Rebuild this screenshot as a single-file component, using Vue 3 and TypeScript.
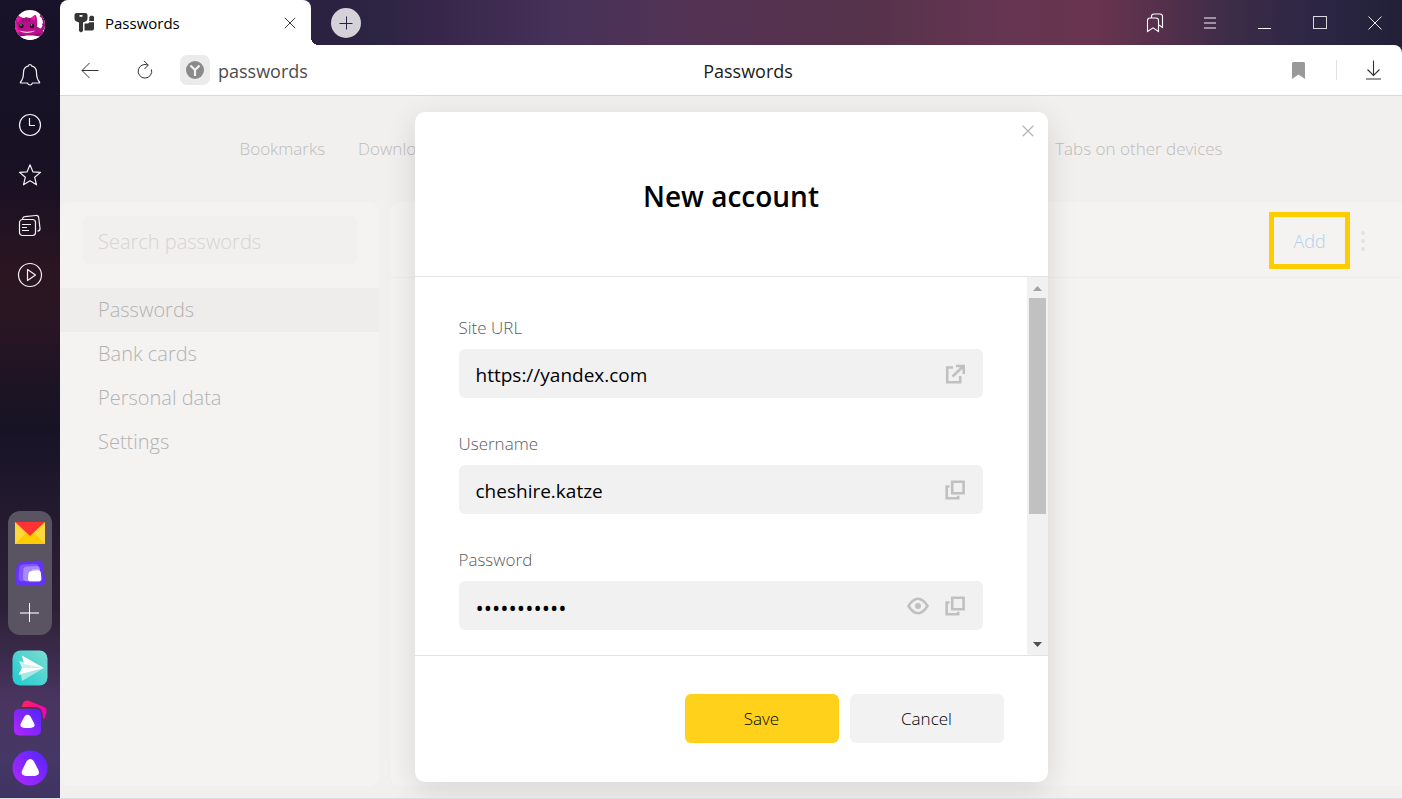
<script setup lang="ts">
import { ref } from 'vue'

interface Section {
  id: string
  title: string
}

const sections: Section[] = [
  { id: 'passwords', title: 'Passwords' },
  { id: 'cards', title: 'Bank cards' },
  { id: 'personal', title: 'Personal data' },
  { id: 'settings', title: 'Settings' },
]

const active = ref('passwords')
const address = ref('passwords')
const search = ref('')
const siteUrl = ref('https://yandex.com')
const username = ref('cheshire.katze')
const password = ref('qwertyuiopa')
const revealed = ref(false)
</script>

<template>
  <div class="browser">
    <aside class="rail">
      <div class="rail-group">
        <button class="rail-item" aria-label="Profile">
          <svg width="32" height="32" viewBox="0 0 32 32">
            <defs><clipPath id="face"><circle cx="16" cy="16" r="15" /></clipPath></defs>
            <circle cx="16" cy="16" r="15" fill="#fff" />
            <g clip-path="url(#face)">
              <path d="M26 6c4 1 5 7 4 11-1 3-3 5-6 5" fill="none" stroke="#a3127e" stroke-width="3" />
              <path d="M2 8q1-2 4-.5l3 1.500q4-1 8 0l3-2.500q2-1.500 2.500 1c.8 4 1 7 .5 10l5 3q2 2 1 4.500L25 28H5l-3-5c-1.500-5-1.500-10 0-15z" fill="#b8128a" />
              <path d="M2.500 7.500l5 1.500-4 5zM21.500 6l-.8 6-4-3zM1 12c2 2 2 8 5 11l-4 1z" fill="#f01ba4" />
              <path d="M9 9v4M12 8v5M15 9v4M28 10l3 1M28 15l3 1" stroke="#7c0c62" />
              <circle cx="7.500" cy="17" r="2.200" fill="#281326" />
              <circle cx="18" cy="17" r="2.200" fill="#281326" />
              <circle cx="7" cy="16" r=".8" fill="#52d6b5" />
              <circle cx="17.500" cy="16" r=".8" fill="#52d6b5" />
              <path d="M5 21.500c5 1.500 11 1.500 16 0-2 3-13 3.500-16 0z" fill="#eac3df" />
              <path d="M3 26c6-2 8 1 12 0s8-2 13-1l-3 4H4z" fill="#990b78" />
              <path d="M4 28c7-2 17-2 24 0v4H4z" fill="#fff" />
            </g>
          </svg>
        </button>
        <button class="rail-item" aria-label="Notifications">
          <svg class="line" width="24" height="24" viewBox="0 0 24 24">
            <path d="M12 1.500c-.9 0-1.500.6-1.500 1.400C7 3.700 5.500 6.500 5.500 9.500c0 5-1 7.500-3 9.500-.4.500-.2 1 .4 1H9.500c.5 1.500 1.300 2 2.500 2s2-.5 2.500-2h6.600c.6 0 .8-.5.4-1-2-2-3-4.500-3-9.500 0-3-1.500-5.800-5-6.600 0-.8-.6-1.400-1.500-1.400z" />
          </svg>
        </button>
        <button class="rail-item" aria-label="History">
          <svg class="line" width="24" height="24" viewBox="0 0 24 24">
            <circle cx="12" cy="12" r="10.500" /><path d="M11.500 5v7.500H17" />
          </svg>
        </button>
        <button class="rail-item" aria-label="Favorites">
          <svg class="line" width="24" height="24" viewBox="0 0 24 24">
            <path d="M12 1.800l2.900 7 7.600.6-5.800 4.900 1.800 7.500-6.500-4-6.500 4 1.800-7.500-5.800-4.900 7.600-.6z" />
          </svg>
        </button>
        <button class="rail-item" aria-label="Collections">
          <svg class="line" width="24" height="24" viewBox="0 0 24 24">
            <rect x="1.500" y="6.500" width="16" height="16" rx="3" />
            <path d="M4.500 6c.3-1.600 1-2.200 2.300-2.300l11-1.200c1.700-.2 2.700.6 2.900 2.200l1.300 10.500c.2 1.900-.8 2.700-2.500 3M4 11.500h9M4 14.500h5M4 17.500h7" />
          </svg>
        </button>
        <button class="rail-item" aria-label="Video">
          <svg class="line" width="26" height="26" viewBox="0 0 26 26">
            <circle cx="13" cy="13" r="11.500" /><path d="M10.500 7.500v11l8-5.500z" />
          </svg>
        </button>
      </div>

      <div class="rail-group">
        <div class="dock">
          <button class="dock-item" aria-label="Mail">
            <svg width="30" height="22" viewBox="0 0 30 22">
              <path d="M0 0h30v22H0z" fill="#ffd93b" />
              <path d="M0 22l11-11h8l11 11z" fill="#fc0" />
              <path d="M0 0h30L15 14z" fill="#f33" />
            </svg>
          </button>
          <button class="dock-item" aria-label="Browser panels">
            <svg width="30" height="26" viewBox="0 0 30 26">
              <path d="M7 2l16-1.500c3-.2 4.500 1 5 4L30 20c.4 3.500-1 5.300-4 5.300H5c-3.500 0-5.200-1.500-5-5L1.600 7C2 4 3.500 2.300 7 2z" fill="#6432f8" />
              <path d="M8 4.500l11-.7c3-.2 4.400.8 4.700 3.500l.6 14H7c-2.500 0-3.600-1-3.500-3.500l.6-9c.2-2.600 1.200-4.100 3.900-4.300z" fill="#8156fb" />
              <path d="M12 6.500l9-.4c2.600 0 3.700 1 3.900 3.400v11.800H12c-2.800 0-4.200-1.200-4-4l.4-7.200c.1-2.300 1-3.500 3.600-3.600z" fill="#a58bfc" />
              <path d="M17 9.500l5-.3c2-.1 3 .9 3.100 3l.2 9H15z" fill="#cdbffd" />
              <path d="M17 11l6-.6c1.800-.1 2.600.5 2.800 2.200l.6 6c.1 1.900-.6 2.700-2.500 2.700h-8c-2 0-3-.7-2.900-2.800l.4-4.500c.2-2 1.400-2.800 3.600-3z" fill="#fff" />
            </svg>
          </button>
          <button class="dock-item" aria-label="Add service">
            <svg width="20" height="20" viewBox="0 0 20 20">
              <path d="M0 10h19" stroke="#b5b1b8" stroke-width="2" /><path d="M9.500 0v19" stroke="#fff" />
            </svg>
          </button>
        </div>
        <button class="rail-item" aria-label="Messenger">
          <svg width="36" height="36" viewBox="0 0 36 36">
            <defs>
              <linearGradient id="teal" x1="1" y1="0" x2="0" y2="1"><stop stop-color="#7edbd2" /><stop offset="1" stop-color="#1dcbd0" /></linearGradient>
            </defs>
            <rect x=".5" y=".5" width="35" height="35" rx="8" fill="url(#teal)" />
            <path d="M9 24l23-6-22 13z" fill="#a5e9e7" />
            <path d="M7 11l25 7-25 7 3-7z" fill="#c9f3f1" />
            <path d="M10 5.500L32 18 12 14z" fill="#fff" /><path d="M6.500 24.500L10 18h22z" fill="#fff" />
          </svg>
        </button>
        <button class="rail-item" aria-label="Alice chat">
          <svg width="36" height="36" viewBox="0 0 36 36">
            <defs>
              <linearGradient id="violet" x1="1" y1="0" x2="0" y2="1"><stop stop-color="#5126ff" /><stop offset="1" stop-color="#b426ff" /></linearGradient>
              <linearGradient id="pink"><stop stop-color="#ff2458" /><stop offset="1" stop-color="#fa00b4" /></linearGradient>
            </defs>
            <path d="M9.500 7l1.500-3.500C12 .8 14 .2 16.500.8L31 6.500c3 1.200 4 3 3.300 6L32.500 19 31 18c0-6-1-10-7-11z" fill="url(#pink)" />
            <rect x="2" y="9" width="27" height="26.500" rx="5" fill="url(#violet)" />
            <path d="M12.500 16.500c1.600-2.400 4.400-2.400 6 0l3.500 6.500c1.600 3.500.3 5-6.500 5s-8-1.500-6.500-5z" fill="#fff" />
          </svg>
        </button>
        <button class="rail-item" aria-label="Alice">
          <svg width="36" height="36" viewBox="0 0 36 36">
            <circle cx="18" cy="18" r="17.500" fill="url(#violet)" />
            <path d="M14.500 11.500c2-3.500 5.500-3.500 7.500 0l4.300 8.500c1.800 4.400.2 6-8 6s-9.700-1.600-8-6z" fill="#fff" />
          </svg>
        </button>
      </div>
    </aside>

    <div class="window">
      <header class="tabbar">
        <div class="tab">
          <svg width="21" height="21" viewBox="0 0 21 21" fill="#353535">
            <path d="M2.500 1h9q2 0 2 2v3.500q0 2-1.500 2.700l-3 1.300V19l-2 1.500L5 19v-8.500L2 9.200Q.5 8.500.5 6.500V3q0-2 2-2zm3 2v1.800h3V3z" fill-rule="evenodd" />
            <path d="M15 5.500l1.500-1.800h2q1.500 0 1.500 1.500V9h-5q.5-1 .3-3.500zM10.500 11.500h3.500l1.500-1.300H20v6.500q0 1.800-1.800 1.800h-7.700z" />
          </svg>
          <span class="tab-title">Passwords</span>
          <button class="plain" aria-label="Close tab">
            <svg width="12" height="12" viewBox="0 0 12 12" fill="none" stroke="#333b4d"><path d="M.8.8l10.400 10.400M11.200.8L.8 11.200" /></svg>
          </button>
        </div>
        <span class="tab-foot"></span>
        <button class="new-tab" aria-label="New tab">
          <svg width="14" height="14" viewBox="0 0 14 14" stroke="#26233a"><path d="M.5 7.500h13M7.500.5v13" /></svg>
        </button>
        <div class="window-controls">
          <button aria-label="Bookmarks panel">
            <svg width="18" height="20" viewBox="0 0 18 20" fill="none" stroke="#fff" stroke-width="1.100">
              <path d="M1.500 18.500V7.500q0-2.500 2.500-2.500h6q2.500 0 2.500 2.500v11L7 14.800zM5.500 4.500V3.500q0-2.500 2.500-2.500h6q2.500 0 2.500 2.500v11L13 12" />
            </svg>
          </button>
          <button aria-label="Menu">
            <svg width="12" height="12" viewBox="0 0 12 12" stroke="#9d91a3" stroke-width="2"><path d="M0 1h12M0 6h12M0 11h12" /></svg>
          </button>
          <button aria-label="Minimize">
            <svg width="13" height="13" viewBox="0 0 13 13" stroke="#fff"><path d="M0 12.500h13" /></svg>
          </button>
          <button aria-label="Maximize">
            <svg width="14" height="14" viewBox="0 0 14 14" fill="none" stroke="#dad8de"><rect x=".5" y=".5" width="13" height="12" /></svg>
          </button>
          <button aria-label="Close window">
            <svg width="14" height="14" viewBox="0 0 14 14" stroke="#fff" stroke-width=".9"><path d="M.5.5l13 13M13.500.5l-13 13" /></svg>
          </button>
        </div>
      </header>

      <div class="toolbar">
        <button class="tool" aria-label="Back">
          <svg width="18" height="16" viewBox="0 0 18 16" fill="none" stroke="#333"><path d="M17.500 8.500H1M8.500 1L1 8.500 8.500 16" /></svg>
        </button>
        <button class="tool" aria-label="Reload">
          <svg width="16" height="20" viewBox="0 0 16 20" fill="none" stroke="#333"><path d="M14.500 9.500A6.800 6.800 0 1 1 11 5.200M7 .8l4.300 4.300L7.500 9" /></svg>
        </button>
        <span class="site-badge">
          <svg width="18" height="18" viewBox="0 0 18 18"><circle cx="9" cy="9" r="9" fill="#8a8a8a" /><path d="M4.500 4.500L9 9l4.500-4.500M9 9v6" fill="none" stroke="#f3f3f3" stroke-width="2.200" /></svg>
        </span>
        <div class="omnibox">
          <input v-model="address" type="text" aria-label="Address" />
          <span class="page-title">Passwords</span>
        </div>
        <button class="plain" aria-label="Bookmark page">
          <svg width="13" height="17" viewBox="0 0 13 17"><path d="M1 0h11l1 1v16l-6.500-4.500L0 17V1z" fill="#999" /></svg>
        </button>
        <span class="divider"></span>
        <button class="plain" aria-label="Downloads panel">
          <svg width="15" height="20" viewBox="0 0 15 20" fill="none" stroke="#333" stroke-width="1.100"><path d="M7.500.5v15M1.500 9.500l6 6 6-6M0 19h15" /></svg>
        </button>
      </div>

      <main class="page">
        <nav class="page-nav">
          <a href="#bookmarks">Bookmarks</a>
          <a href="#downloads">Downloads</a>
          <a class="last" href="#devices">Tabs on other devices</a>
        </nav>
        <div class="panels">
          <section class="side-panel">
            <input v-model="search" type="text" placeholder="Search passwords" aria-label="Search passwords" />
            <ul>
              <li v-for="item in sections" :key="item.id">
                <a :href="'#' + item.id" :class="{ active: active === item.id }" @click.prevent="active = item.id">{{ item.title }}</a>
              </li>
            </ul>
          </section>
          <section class="list-panel">
            <div class="list-tools">
              <button class="add">Add</button>
              <button class="plain" aria-label="More">
                <svg width="4" height="20" viewBox="0 0 4 20" fill="#e3e2e1"><circle cx="2" cy="2" r="2" /><circle cx="2" cy="10" r="2" /><circle cx="2" cy="18" r="2" /></svg>
              </button>
            </div>
          </section>
        </div>

        <div class="overlay">
          <form class="dialog" role="dialog" aria-labelledby="dialog-title" @submit.prevent>
            <header class="dialog-head">
              <h1 id="dialog-title">New account</h1>
              <button type="button" class="plain dialog-close" aria-label="Close">
                <svg width="12" height="12" viewBox="0 0 12 12" stroke="#b5b5b5" stroke-width="1.300"><path d="M.7.7l10.600 10.600M11.300.7L.7 11.300" /></svg>
              </button>
            </header>
            <div class="dialog-body">
              <div class="fields">
                <div class="field">
                  <label for="site-url">Site URL</label>
                  <div class="box">
                    <input id="site-url" v-model="siteUrl" type="text" />
                    <button type="button" class="plain" aria-label="Open site">
                      <svg class="grey" width="20" height="20" viewBox="0 0 20 20"><path d="M8 3.500H2.200v14.800h13V12M11 2h7.800v8M18 2.500L7.500 12.500" /></svg>
                    </button>
                  </div>
                </div>
                <div class="field">
                  <label for="username">Username</label>
                  <div class="box">
                    <input id="username" v-model="username" type="text" />
                    <button type="button" class="plain" aria-label="Copy username">
                      <svg class="grey" width="20" height="20" viewBox="0 0 20 20"><path d="M7.200 1.700h11.400v11.600H7.200zM4.500 6.500H1.700v11.800h11.500v-2.500" /></svg>
                    </button>
                  </div>
                </div>
                <div class="field">
                  <label for="password">Password</label>
                  <div class="box">
                    <input id="password" v-model="password" :type="revealed ? 'text' : 'password'" />
                    <button type="button" class="plain" aria-label="Show password" @click="revealed = !revealed">
                      <svg class="grey eye" width="22" height="18" viewBox="0 0 22 18"><path d="M1.500 9Q6 1.800 11 1.800T20.500 9Q16 16.200 11 16.200T1.500 9z" /><circle cx="11" cy="9" r="3" /></svg>
                    </button>
                    <button type="button" class="plain" aria-label="Copy password">
                      <svg class="grey" width="20" height="20" viewBox="0 0 20 20"><path d="M7.200 1.700h11.400v11.600H7.200zM4.500 6.500H1.700v11.800h11.500v-2.500" /></svg>
                    </button>
                  </div>
                </div>
              </div>
              <div class="scrollbar" aria-hidden="true">
                <svg width="9" height="5" viewBox="0 0 9 5"><path d="M0 5h9L4.500 0z" fill="#a3a3a3" /></svg>
                <div class="track"><div class="thumb"></div></div>
                <svg width="9" height="5" viewBox="0 0 9 5"><path d="M0 0h9L4.500 5z" fill="#505050" /></svg>
              </div>
            </div>
            <footer class="dialog-foot">
              <button type="submit" class="action primary">Save</button>
              <button type="button" class="action">Cancel</button>
            </footer>
          </form>
        </div>
      </main>
    </div>
  </div>
</template>

<style>
body {
  background: #dcdee3;
}
</style>

<style scoped>
.browser,
.browser * {
  box-sizing: border-box;
}
.browser {
  display: flex;
  height: calc(100vh - 1px);
  min-height: 640px;
  font-family: "Open Sans", "Noto Sans", sans-serif;
  color: #000;
  overflow: hidden;
}
svg {
  display: block;
  flex: none;
}
button {
  display: flex;
  align-items: center;
  justify-content: center;
  padding: 0;
  border: 0;
  background: none;
  font: inherit;
  color: inherit;
}
input {
  min-width: 0;
  padding: 0;
  border: 0;
  outline: 0;
  background: none;
  font: inherit;
  color: inherit;
}
a {
  color: inherit;
  text-decoration: none;
}

.rail {
  display: flex;
  flex: none;
  flex-direction: column;
  justify-content: space-between;
  width: 60px;
  padding-bottom: 5px;
  background: linear-gradient(180deg, #19132a 0%, #161124 16%, #1a1123 23%, #2b1521 34%, #2a1523 40%, #1c1423 49%, #171326 54%, #241a30 64%, #2c2036 76%, #4a3560 88%, #453766 95%, #3e3462 100%);
}
.rail-item {
  width: 60px;
  height: 50px;
}
.line {
  fill: none;
  stroke: #f2f0f4;
  stroke-width: 1.2;
  stroke-linejoin: round;
}
.dock {
  margin: 0 8px 8px;
  padding: 2px 0;
  border-radius: 12px;
  background: #5a5361;
}
.dock-item {
  width: 100%;
  height: 40px;
}

.window {
  display: flex;
  flex: 1;
  flex-direction: column;
  min-width: 0;
  background: linear-gradient(90deg, #19132a 0, #2a203f 18%, #2c2543 24%, #38264a 28%, #463158 37%, #533354 47%, #56324b 60%, #653552 70%, #69344f 77%, #55304c 82%, #3d2c48 87%, #2d2745 93%, #222037 100%);
}
.tabbar {
  display: flex;
  align-items: center;
  height: 45px;
}
.tab {
  display: flex;
  align-items: center;
  width: 251px;
  height: 100%;
  padding: 0 15px 0 14px;
  border-radius: 8px 8px 0 0;
  background: #fff;
}
.tab-title {
  flex: 1;
  margin-left: 10px;
  font-size: 15px;
  line-height: 20px;
}
.tab-foot {
  align-self: flex-end;
  width: 8px;
  height: 8px;
  background: radial-gradient(circle at 100% 0, transparent 8px, #fff 8px);
}
.new-tab {
  width: 30px;
  height: 30px;
  margin-left: 12px;
  border-radius: 50%;
  background: #d4d1d9;
}
.window-controls {
  display: flex;
  margin-left: auto;
}
.window-controls button {
  width: 55px;
  height: 45px;
}

.toolbar {
  display: flex;
  align-items: center;
  height: 51px;
  padding: 0 21px 0 2px;
  border-bottom: 1px solid #d9d9d9;
  border-radius: 0 8px 0 0;
  background: #fff;
}
.tool {
  width: 55px;
  height: 50px;
}
.site-badge {
  display: flex;
  align-items: center;
  justify-content: center;
  width: 30px;
  height: 30px;
  margin-left: 8px;
  border-radius: 7px;
  background: #ebebeb;
}
.omnibox {
  display: grid;
  flex: 1;
  grid-template-columns: 1fr auto 1fr;
  align-items: center;
  padding: 2px 14px 0 8px;
  font-size: 18px;
  line-height: 24px;
}
.omnibox input {
  color: #4d4d4d;
}
.page-title {
  color: #1a1a1a;
}
.divider {
  width: 1px;
  height: 20px;
  margin: 0 29px 0 31px;
  background: #e0e0e0;
}

.page {
  position: relative;
  display: flex;
  flex: 1;
  flex-direction: column;
  min-height: 0;
  padding-bottom: 12px;
  background: #f1f0ee;
}
.page-nav {
  display: flex;
  align-items: center;
  gap: 33px;
  width: 100%;
  max-width: 983px;
  height: 106px;
  margin: 0 auto;
  color: #bdbcbb;
  font-size: 17px;
  font-weight: 300;
  line-height: 24px;
}
.page-nav .last {
  margin-left: auto;
}
.panels {
  display: flex;
  flex: 1;
  gap: 11px;
}
.side-panel {
  width: 319px;
  padding-top: 14px;
  border-radius: 10px;
  background: #f4f3f1;
  font-size: 20px;
  font-weight: 300;
}
.side-panel input {
  display: block;
  width: calc(100% - 45px);
  height: 48px;
  margin: 0 22px 24px 23px;
  padding: 2px 15px 0;
  border-radius: 6px;
  background: #f1f0ee;
}
.side-panel input::placeholder {
  color: #d5d4d3;
}
ul {
  margin: 0;
  padding: 0;
  list-style: none;
}
li a {
  display: block;
  padding: 0 38px;
  color: #b3b2b1;
  line-height: 44px;
}
li a.active {
  background: #eeedeb;
}
.list-panel {
  flex: 1;
  border-radius: 10px 0 0 10px;
  background: #f4f3f1;
}
.list-tools {
  display: flex;
  align-items: center;
  justify-content: flex-end;
  gap: 11px;
  height: 76px;
  padding: 2px 37px 0 0;
  border-bottom: 1px solid #eeedeb;
}
.add {
  width: 81px;
  height: 57px;
  border: 5px solid #fc0;
  color: #b4d0ea;
  font-size: 18px;
  font-weight: 300;
}

.overlay {
  position: absolute;
  inset: 0;
  display: flex;
  justify-content: center;
  padding: 16px;
  pointer-events: none;
}
.dialog {
  display: flex;
  flex-direction: column;
  width: 633px;
  border-radius: 10px;
  background: #fff;
  box-shadow: 0 8px 32px rgba(0, 0, 0, 0.12);
  pointer-events: auto;
  overflow: hidden;
}
.dialog-head {
  position: relative;
  display: flex;
  align-items: center;
  justify-content: center;
  height: 165px;
  padding-top: 4px;
  border-bottom: 1px solid #e3e3e3;
}
h1 {
  margin: 0;
  font-size: 28px;
  font-weight: 600;
  line-height: 36px;
}
.dialog-close {
  position: absolute;
  top: 13px;
  right: 14px;
}
.dialog-body {
  display: flex;
  flex: 1;
  min-height: 0;
  overflow: hidden;
}
.fields {
  display: flex;
  flex: 1;
  flex-direction: column;
  gap: 35px;
  padding: 40px 44px 0;
}
.field label {
  display: block;
  margin-bottom: 10px;
  color: #5c5c5c;
  font-size: 17px;
  font-weight: 300;
  line-height: 22px;
}
.box {
  display: flex;
  align-items: center;
  gap: 16px;
  height: 49px;
  padding: 0 18px 0 17px;
  border-radius: 6px;
  background: #f1f1f1;
}
.box input {
  flex: 1;
  height: 100%;
  padding-top: 2px;
  font-size: 19px;
}
.box input[type="password"] {
  font-size: 22px;
}
.grey {
  fill: none;
  stroke: #c0c0c0;
  stroke-width: 2.6;
}
.eye circle {
  fill: #c0c0c0;
  stroke: none;
}
.scrollbar {
  display: flex;
  flex-direction: column;
  align-items: center;
  justify-content: space-between;
  width: 21px;
  padding: 9px 2px 8px;
  background: #f1f1f1;
}
.track {
  flex: 1;
  width: 100%;
  margin: 7px 0;
}
.thumb {
  height: 64%;
  background: #c1c1c1;
}
.dialog-foot {
  display: flex;
  justify-content: flex-end;
  gap: 11px;
  padding: 38px 44px 39px;
  border-top: 1px solid #e3e3e3;
}
.action {
  width: 154px;
  height: 49px;
  border-radius: 6px;
  background: #f2f2f2;
  color: #000;
  font-size: 17px;
  font-weight: 300;
}
.action.primary {
  background: #ffd11b;
}
</style>
